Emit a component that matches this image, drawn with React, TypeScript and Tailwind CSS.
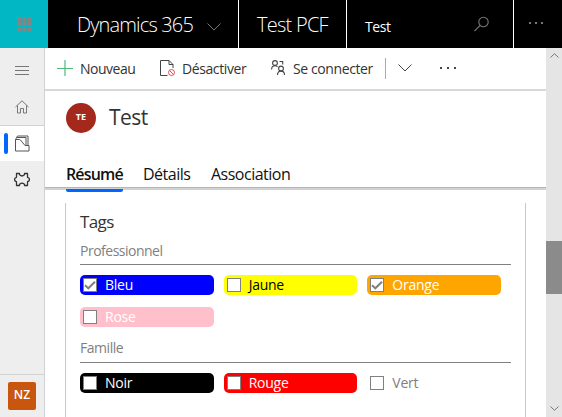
import React from "react";

type Tag = { label: string; box: string; checked?: boolean };

const professional: Tag[] = [
  { label: "Bleu", box: "bg-[#0000ff] text-white", checked: true },
  { label: "Jaune", box: "bg-[#ffff00] text-black" },
  { label: "Orange", box: "bg-[#ffa500] text-white", checked: true },
  { label: "Rose", box: "bg-[#ffc0cb] text-white" },
];

const family: Tag[] = [
  { label: "Noir", box: "bg-black text-white" },
  { label: "Rouge", box: "bg-[#ff0000] text-white" },
  { label: "Vert", box: "bg-white text-[#808080]" },
];

function Chevron({ className, d, w, h }: { className?: string; d: string; w: number; h: number }) {
  return (
    <svg className={className} width={w} height={h} viewBox={`0 0 ${w} ${h}`} fill="none" stroke="currentColor">
      <path d={d} />
    </svg>
  );
}

function Dots({ className, gap }: { className: string; gap: string }) {
  return (
    <div className={`flex ${gap} ${className}`}>
      <i className="size-[2px] bg-current" />
      <i className="size-[2px] bg-current" />
      <i className="size-[2px] bg-current" />
    </div>
  );
}

function TagGrid({ tags }: { tags: Tag[] }) {
  return (
    <div className="grid grid-cols-3 gap-y-3 pt-[10px]">
      {tags.map((t) => (
        <div key={t.label} className={`flex h-5 w-[133.600px] items-center rounded-[5px] pl-[3px] ${t.box}`}>
          <span className="flex size-[14px] shrink-0 items-center justify-center border border-[#808080] bg-white text-[#808080]">
            {t.checked && (
              <svg width="12" height="12" viewBox="0 0 12 12" fill="none" stroke="currentColor" strokeWidth="2">
                <path d="M1 6.2 4.3 9.3 11 2.7" />
              </svg>
            )}
          </span>
          <span className="ml-2 text-[14px] leading-5 tracking-[-0.25px]">{t.label}</span>
        </div>
      ))}
    </div>
  );
}

export default function App() {
  return (
    <div className="flex h-[417px] w-[562px] flex-col overflow-hidden bg-white font-['Open_Sans','Noto_Sans',sans-serif] text-[#333]">
      <header className="flex h-12 shrink-0 bg-black text-white">
        <div className="flex w-12 items-center justify-center bg-[#00b7c3]">
          <svg width="15" height="14" viewBox="0 0 15 14" fill="#858585">
            <path d="M0 0h4v4H0zM5.500 0h4v4h-4zM11 0h4v4h-4zM0 5h4v4H0zM5.500 5h4v4h-4zM11 5h4v4h-4zM0 10h4v4H0zM5.500 10h4v4h-4zM11 10h4v4h-4z" />
          </svg>
        </div>
        <div className="flex w-[191px] border-r border-white pt-[11px] pl-[29px]">
          <span className="w-[130px] text-[20px] leading-7 font-light tracking-[-0.85px] whitespace-nowrap">Dynamics 365</span>
          <Chevron className="mt-[12px] text-[#777]" d="M.5 .5 7 7 13.500 .5" w={14} h={8} />
        </div>
        <div className="w-[108px] border-r border-white pt-[11px] pl-[18px] text-[20px] leading-7 font-light tracking-[-0.75px] whitespace-nowrap">Test PCF</div>
        <div className="flex w-[167px] border-r border-white pl-[18px]">
          <span className="w-[109px] pt-[17px] text-[14px] leading-5 tracking-[-0.4px]">Test</span>
          <svg className="mt-4" width="16" height="16" viewBox="0 0 16 16" fill="none" stroke="#777" strokeWidth="1.1">
            <circle cx="9.500" cy="6" r="4.700" />
            <path d="M6.200 9.300.5 15" />
          </svg>
        </div>
        <Dots className="mt-[22px] ml-[15px] text-[#777]" gap="gap-1" />
      </header>

      <div className="flex min-h-0 flex-1">
        <nav className="flex w-[45px] shrink-0 flex-col border-r border-[#d2d2d2] bg-[#eeeeee]">
          <div className="flex h-[43px] items-center justify-center pt-[2px]">
            <svg width="14" height="9" viewBox="0 0 14 9" stroke="#777">
              <path d="M0 .5h14M0 4.500h14M0 8.500h14" />
            </svg>
          </div>
          <div className="flex h-[35px] items-center justify-center border-b border-[#d2d2d2] pb-[2px]">
            <svg width="14" height="14" viewBox="0 0 14 14" fill="none" stroke="#777">
              <path d="M.5 7 7 .8 13.500 7M2.500 5.500v7.500H5.500V8.500h3V13h3V5.500" />
            </svg>
          </div>
          <div className="flex h-[35px] items-center bg-white pl-1">
            <i className="h-[21px] w-1 rounded-[2px] bg-[#0066ff]" />
            <svg className="ml-[7px]" width="15" height="17" viewBox="0 0 15 17" fill="none" stroke="#555">
              <path d="M.5 4.500v11.500h13.500v-5.500H10L5.500 5 4.500 4.500H.5L2.500 1h10.500v9.500M2 2.500h9v8" />
            </svg>
          </div>
          <div className="flex h-[36px] items-center justify-center">
            <svg width="16" height="15" viewBox="0 0 16 15" fill="none" stroke="#333" strokeWidth="1.3" strokeLinejoin="round">
              <path d="M2.500 1.500H5.500C5 4.800 11 4.800 10.500 1.500H13.500V5.300C13.500 5.300 15.400 5.500 15.400 7.500S13.500 9.700 13.500 9.700V13.500H10.500C11 10.200 5 10.200 5.500 13.500H2.500V9.700C2.500 9.700 .6 9.500 .6 7.500S2.500 5.300 2.500 5.300Z" />
            </svg>
          </div>
          <div className="mt-auto flex h-[43px] border-t border-[#d2d2d2] pt-[7px] pl-2">
            <div className="flex size-7 items-center justify-center rounded-[2px] bg-[#c8560f] pb-[2px] text-[12px] font-semibold text-white">NZ</div>
          </div>
        </nav>

        <main className="flex min-w-0 flex-1 flex-col">
          <div className="flex h-[43px] shrink-0 border-b-2 border-[#d8d8d8] pl-3 text-[14px] leading-5 whitespace-nowrap">
            <svg className="mt-3" width="16" height="16" viewBox="0 0 16 16" stroke="#4fba7c" strokeWidth="1.2">
              <path d="M0 8.500h16M8 0v16" />
            </svg>
            <span className="mt-[11px] ml-[7px] w-[80px] tracking-[-0.5px]">Nouveau</span>
            <svg className="mt-3" width="16" height="17" viewBox="0 0 16 17" fill="none" stroke="#444">
              <path d="M7.500 15.500H.5V.5h8.500l4 4V8M9 .5v4h4" />
              <circle cx="11.500" cy="12.500" r="3" stroke="#ee4a52" />
              <path d="m9.500 10.500 4 4" stroke="#ee4a52" />
            </svg>
            <span className="mt-[11px] ml-[6px] w-[89px] tracking-[-0.4px]">Désactiver</span>
            <svg className="mt-3" width="15" height="16" viewBox="0 0 15 16" fill="none" stroke="#444" strokeWidth="1.1">
              <circle cx="4" cy="3" r="2.400" />
              <path d="M.6 9.500Q.6 5.800 4 5.800q1.500 0 2.500 1M8.500 1.500h3.200v3" />
              <circle cx="10" cy="8.500" r="2.400" />
              <path d="M6.500 15q0-3.900 3.500-3.900T13.500 15" />
            </svg>
            <span className="mt-[11px] ml-[7px] w-[92px] tracking-[-0.4px]">Se connecter</span>
            <i className="mt-[10px] h-[21px] w-px bg-[#aaa]" />
            <Chevron className="mt-4 ml-[12px] text-[#444]" d="M.5 .5 7 7 13.500 .5" w={14} h={8} />
            <Dots className="mt-[19px] ml-7 text-[#444]" gap="gap-[5px]" />
          </div>

          <div className="flex h-[96px] shrink-0 flex-col">
            <div className="flex h-[53px] items-center pl-[21px]">
              <div className="flex size-[30px] items-center justify-center rounded-full bg-[#a4291c] pb-px text-[9px] font-bold text-white">TE</div>
              <h1 className="ml-[13px] pb-[2px] text-[21px] leading-7 tracking-[-0.5px]">Test</h1>
            </div>
            <div className="flex pt-[18px] pl-[21px] text-[16px] leading-6 text-[#111] whitespace-nowrap">
              <span className="w-[77px] font-semibold tracking-[-0.85px]">Résumé</span>
              <span className="w-[68px] tracking-[-0.5px]">Détails</span>
              <span className="tracking-[-0.5px]">Association</span>
            </div>
          </div>
          <div className="h-[3px] shrink-0 border-t border-[#b5b5b5] bg-[#d2d2d2] pl-[21px] pt-[1px]">
            <div className="h-[3px] w-[57px] rounded-b-[2px] bg-[#0066ff]" />
          </div>

          <section className="mx-5 mt-[13px] flex-1 border-x border-[#c8c8c8] pr-[14px] pl-[14px]">
            <h2 className="pt-[7px] text-[17px] leading-6 tracking-[-0.6px]">Tags</h2>
            <div className="h-[31px] border-b border-[#808080] pt-[7px] text-[14px] leading-5 text-[#808080]">
              <span className="tracking-[-0.5px]">Professionnel</span>
            </div>
            <TagGrid tags={professional} />
            <div className="mt-2 h-[28px] border-b border-[#808080] pt-[3px] text-[14px] leading-5 text-[#808080]">
              <span className="tracking-[-0.45px]">Famille</span>
            </div>
            <TagGrid tags={family} />
          </section>
        </main>

        <aside className="flex w-4 shrink-0 flex-col items-center bg-[#e5e5e5] text-[#777]">
          <Chevron className="mt-[5px]" d="M.5 4.500 4.500 .7 8.500 4.500" w={9} h={5} />
          <div className="mt-[183px] h-[53px] w-full bg-[#8b8b8b]" />
          <Chevron className="mt-auto mb-[6px]" d="M.5 .5 4.500 4.300 8.500 .5" w={9} h={5} />
        </aside>
      </div>
    </div>
  );
}
